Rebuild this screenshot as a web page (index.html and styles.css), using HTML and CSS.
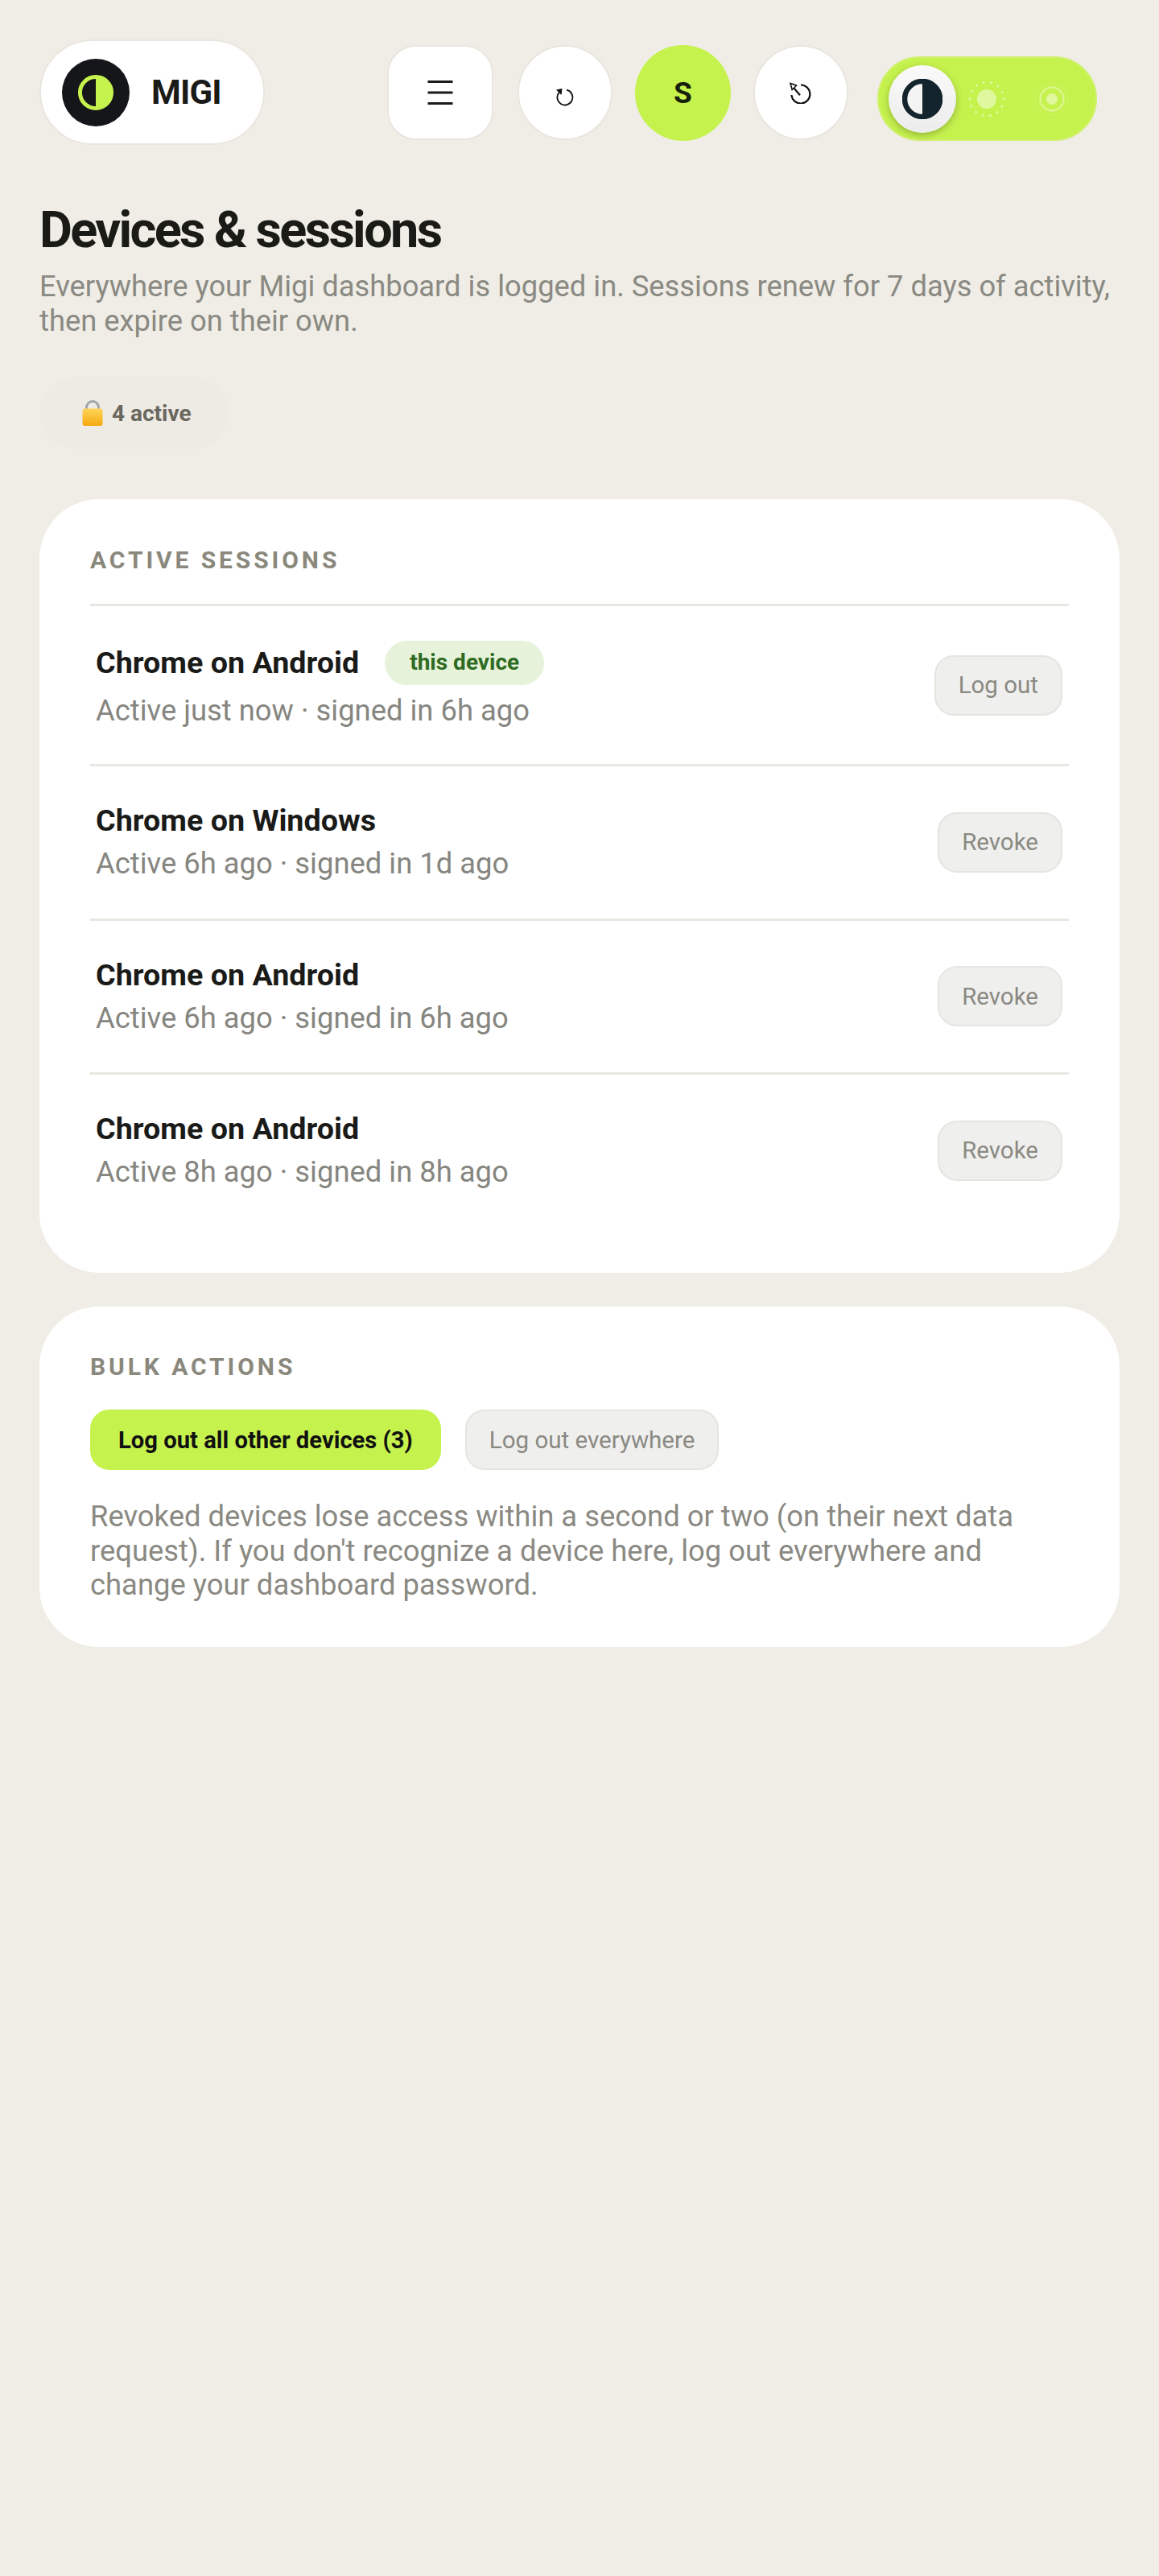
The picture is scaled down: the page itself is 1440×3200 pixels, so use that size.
FILE: index.html
```html
<!DOCTYPE html>
<html lang="en">
<head>
    <meta charset="UTF-8">
    <title>Devices &amp; sessions</title>
    <link rel="stylesheet" href="styles.css">
</head>
<body>
<div class="page">
    <!-- top bar -->
    <header class="topbar">
        <div class="brand">
            <span class="brand-mark">
                <svg viewBox="0 0 24 24" width="46" height="46">
                    <circle cx="12" cy="12" r="10.200" fill="none" stroke="#c6f24e" stroke-width="2.600"/>
                    <path d="M12 1.800a10.200 10.200 0 0 1 0 20.400z" fill="#c6f24e"/>
                </svg>
            </span>
            <span class="brand-name">MIGI</span>
        </div>
        <div class="tools">
            <button class="tool tool-menu">
                <svg viewBox="0 0 32 30" width="32" height="30">
                    <path d="M0.500 1.500h31M0.500 15h31M0.500 28.500h31" stroke="#1a1a18" stroke-width="2.800" fill="none"/>
                </svg>
            </button>
            <button class="tool tool-round">
                <svg class="icon-low" viewBox="0 0 24 24" width="24" height="24">
                    <path d="M14 2.700A9.500 9.500 0 1 1 4.500 6" fill="none" stroke="#111" stroke-width="1.800"/>
                    <path d="M1 2.500L8.500 1l-1 8z" fill="#111"/>
                </svg>
            </button>
            <button class="tool-user">S</button>
            <button class="tool tool-round">
                <svg viewBox="0 0 28 28" width="28" height="28">
                    <path d="M14 4.500A11.500 11.500 0 1 1 2.400 17" fill="none" stroke="#111" stroke-width="2.200"/>
                    <path d="M13 17.300L5 8" stroke="#111" stroke-width="2.200"/>
                    <path d="M1 2.500l7.500 2.700-5.300 5.300z" fill="#fff" stroke="#111" stroke-width="1.600"/>
                </svg>
            </button>
            <div class="theme-switch">
                <span class="knob">
                    <svg viewBox="0 0 50 50" width="50" height="50">
                        <circle cx="25" cy="25" r="22" fill="#f3f4f3" stroke="#14242c" stroke-width="6.500"/>
                        <path d="M25 0a25 25 0 0 1 0 50z" fill="#14242c"/>
                    </svg>
                </span>
                <span class="mode">
                    <svg viewBox="0 0 48 48" width="48" height="48">
                        <circle cx="24" cy="24" r="12" fill="#fff" opacity="0.45"/>
                        <circle cx="24" cy="24" r="21" fill="none" stroke="#fff" stroke-width="2.800" stroke-linecap="round" stroke-dasharray="0.100 9.330" opacity="0.5"/>
                    </svg>
                </span>
                <span class="mode">
                    <svg viewBox="0 0 48 48" width="48" height="48">
                        <circle cx="24" cy="24" r="7" fill="#fff" opacity="0.45"/>
                        <circle cx="24" cy="24" r="14.500" fill="none" stroke="#fff" stroke-width="2.500" opacity="0.35"/>
                        <circle cx="24" cy="24" r="20" fill="none" stroke="#fff" stroke-width="1" opacity="0.12"/>
                    </svg>
                </span>
            </div>
        </div>
    </header>

    <!-- heading -->
    <h1 class="title">Devices &amp; sessions</h1>
    <p class="subtitle">Everywhere your Migi dashboard is logged in. Sessions renew for 7 days of activity, then expire on their own.</p>
    <div class="count">
        <svg viewBox="0 0 26 32" width="26" height="32">
            <defs>
                <linearGradient id="lockBody" x1="0" y1="0" x2="0" y2="1">
                    <stop offset="0" stop-color="#ffd55a"/>
                    <stop offset="1" stop-color="#f6a90f"/>
                </linearGradient>
            </defs>
            <path d="M5.500 12V9a7.500 7.500 0 0 1 15 0v3" fill="none" stroke="#a2a6aa" stroke-width="3"/>
            <rect x="0.500" y="10.500" width="25" height="21.500" rx="3" fill="url(#lockBody)"/>
        </svg>
        <span>4 active</span>
    </div>

    <!-- sessions -->
    <section class="card card-sessions">
        <h2 class="card-label">ACTIVE SESSIONS</h2>
        <div class="session session-current">
            <div class="session-info">
                <div class="session-name">Chrome on Android <span class="tag">this device</span></div>
                <div class="session-meta">Active just now · signed in 6h ago</div>
            </div>
            <button class="btn">Log out</button>
        </div>
        <div class="session">
            <div class="session-info">
                <div class="session-name">Chrome on Windows</div>
                <div class="session-meta">Active 6h ago · signed in 1d ago</div>
            </div>
            <button class="btn">Revoke</button>
        </div>
        <div class="session">
            <div class="session-info">
                <div class="session-name">Chrome on Android</div>
                <div class="session-meta">Active 6h ago · signed in 6h ago</div>
            </div>
            <button class="btn">Revoke</button>
        </div>
        <div class="session">
            <div class="session-info">
                <div class="session-name">Chrome on Android</div>
                <div class="session-meta">Active 8h ago · signed in 8h ago</div>
            </div>
            <button class="btn">Revoke</button>
        </div>
    </section>

    <!-- bulk actions -->
    <section class="card card-bulk">
        <h2 class="card-label">BULK ACTIONS</h2>
        <div class="bulk-buttons">
            <button class="btn btn-primary">Log out all other devices (3)</button>
            <button class="btn">Log out everywhere</button>
        </div>
        <p class="note">Revoked devices lose access within a second or two (on their next data request). If you don't recognize a device here, log out everywhere and change your dashboard password.</p>
    </section>
</div>
</body>
</html>
```

FILE: styles.css
```css
* {
    margin: 0;
    padding: 0;
    box-sizing: border-box;
}

body {
    background-color: #efede6;
    font-family: Roboto, "Liberation Sans", sans-serif;
    color: #1a1a18;
}

.page {
    padding: 49px 49px 0;
}

button {
    font-family: inherit;
}

/* top bar */
.topbar {
    display: flex;
    align-items: flex-start;
    height: 131px;
}

.brand {
    width: 280px;
    height: 131px;
    padding-left: 26px;
    display: flex;
    align-items: center;
    background-color: #fff;
    border: 2px solid #e8e6de;
    border-radius: 66px;
}

.brand-mark {
    width: 84px;
    height: 84px;
    flex: none;
    border-radius: 50%;
    background-color: #15161a;
    display: flex;
    align-items: center;
    justify-content: center;
}

.brand-name {
    margin-left: 27px;
    font-size: 42px;
    font-weight: 700;
    letter-spacing: -0.800px;
}

.tools {
    margin-left: 152px;
    display: flex;
    align-items: flex-start;
}

.tool {
    margin-top: 7px;
    height: 118px;
    background-color: #fff;
    border: 2px solid #e8e6de;
    display: flex;
    align-items: center;
    justify-content: center;
}

.tool-menu {
    width: 132px;
    border-radius: 36px;
    margin-right: 30px;
}

.tool-round {
    width: 118px;
    border-radius: 50%;
}

.icon-low {
    margin-top: 12px;
}

.tool-user {
    width: 119px;
    height: 119px;
    margin: 7px 28px 0 28px;
    border: none;
    border-radius: 50%;
    background-color: #c6f24e;
    color: #16210c;
    font-size: 37px;
    font-weight: 700;
}

/* theme switch */
.theme-switch {
    width: 273px;
    height: 105px;
    margin: 21px 0 0 36px;
    padding-left: 12px;
    display: flex;
    align-items: center;
    background-color: #c6f24e;
    border: 2px solid #d0f070;
    border-radius: 53px;
}

.knob {
    width: 84px;
    height: 84px;
    flex: none;
    border-radius: 50%;
    background: linear-gradient(#fafafa, #ececec);
    box-shadow: 0 3px 8px rgba(60, 70, 30, 0.35);
    display: flex;
    align-items: center;
    justify-content: center;
}

.mode {
    width: 48px;
    height: 48px;
    margin-left: 14px;
}

.mode + .mode {
    margin-left: 33px;
}

/* heading */
.title {
    margin: 71px 0 0;
    font-size: 63px;
    line-height: 70px;
    font-weight: 700;
    letter-spacing: -2.650px;
    color: #1a1a16;
}

.subtitle {
    margin-top: 14px;
    font-size: 36.350px;
    line-height: 42.500px;
    color: #8a8982;
}

.count {
    width: 235px;
    height: 90px;
    margin-top: 48px;
    padding-left: 53px;
    display: flex;
    align-items: center;
    gap: 11px;
    background-color: #edebe4;
    border-radius: 45px;
    font-size: 28px;
    font-weight: 700;
    color: #6a675f;
}

/* cards */
.card {
    background-color: #fff;
    border-radius: 74px;
    padding: 0 63px;
}

.card-sessions {
    height: 961px;
    margin-top: 62px;
    padding-top: 58px;
}

.card-bulk {
    height: 423px;
    margin-top: 42px;
    padding-top: 57px;
}

.card-label {
    font-size: 30px;
    line-height: 36px;
    font-weight: 700;
    letter-spacing: 3.900px;
    color: #8a887c;
}

.session {
    height: 191.500px;
    padding: 0 8px 0 7px;
    display: flex;
    align-items: center;
    justify-content: space-between;
    border-top: 3px solid #e8e8e2;
}

.card-label + .session {
    margin-top: 36px;
}

.session-current {
    height: 199px;
}

.session-info {
    margin-bottom: 1px;
}

.session-current .session-info {
    margin-bottom: 3px;
}

.session-name {
    font-size: 37.700px;
    line-height: 44px;
    font-weight: 700;
    color: #1a1a18;
    display: flex;
    align-items: center;
}

.session-meta {
    margin-top: 11px;
    font-size: 36.400px;
    line-height: 42px;
    color: #868680;
}

.tag {
    margin-left: 32px;
    width: 198px;
    height: 55px;
    display: flex;
    align-items: center;
    justify-content: center;
    border-radius: 28px;
    background-color: #e6f3da;
    color: #2f6b22;
    font-size: 28px;
    font-weight: 700;
}

.btn {
    height: 75px;
    padding: 0 28px;
    background-color: #efefee;
    border: 2px solid #e5e5e0;
    border-radius: 24px;
    color: #8a8982;
    font-size: 29.500px;
}

.bulk-buttons {
    margin-top: 35px;
    display: flex;
    gap: 30px;
}

.btn-primary {
    padding: 0 35px;
    background-color: #c6f24e;
    border: none;
    color: #111;
    font-size: 29.200px;
    font-weight: 700;
}

.note {
    margin-top: 37px;
    font-size: 36.400px;
    line-height: 42.500px;
    color: #8a8982;
}
```
